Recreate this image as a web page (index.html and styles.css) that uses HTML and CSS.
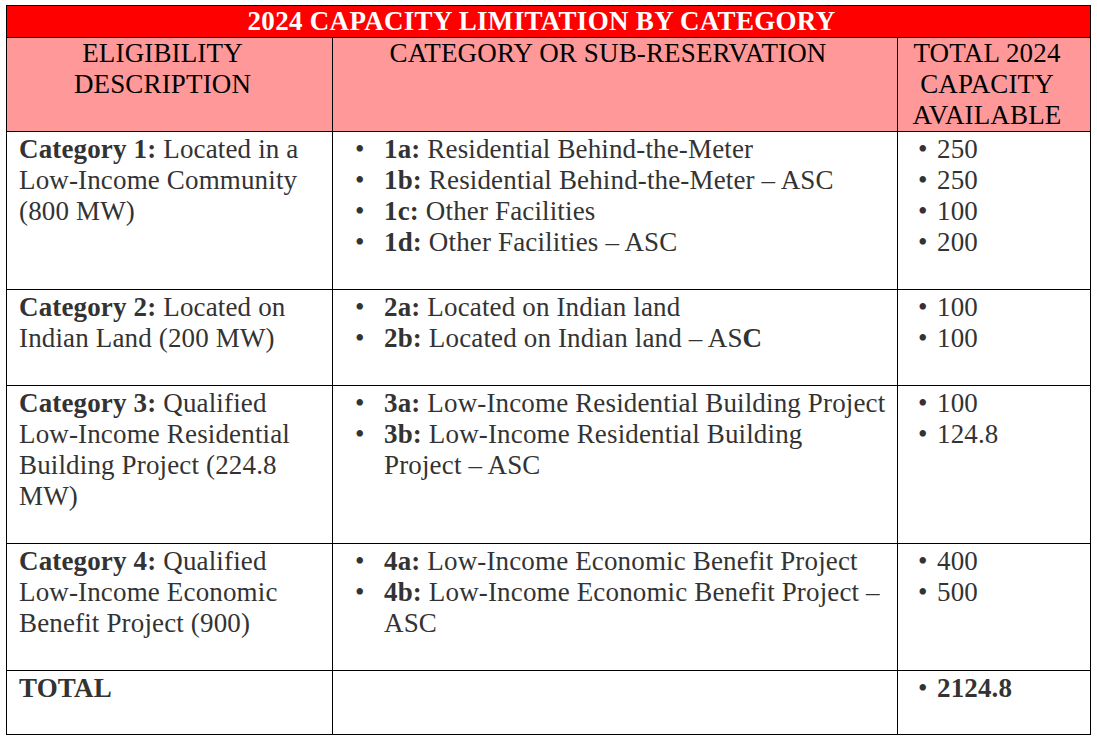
FILE: index.html
```html
<!DOCTYPE html>
<html lang="en">
<head>
<meta charset="utf-8">
<title>2024 Capacity Limitation by Category</title>
<link rel="stylesheet" href="styles.css">
</head>
<body>
<table class="cap-table">
  <colgroup>
    <col class="col-desc">
    <col class="col-cat">
    <col class="col-total">
  </colgroup>
  <thead>
    <tr class="title-row">
      <th colspan="3">2024 CAPACITY LIMITATION BY CATEGORY</th>
    </tr>
    <tr class="head-row">
      <th>ELIGIBILITY DESCRIPTION</th>
      <th>CATEGORY OR SUB-RESERVATION</th>
      <th>TOTAL 2024 CAPACITY AVAILABLE</th>
    </tr>
  </thead>
  <tbody>
    <tr>
      <td class="desc"><b>Category 1:</b> Located in a <span class="nowrap">Low-Income</span> Community (800 MW)</td>
      <td>
        <ul class="list list-wide">
          <li><span><b>1a:</b> Residential Behind-the-Meter</span></li>
          <li><span><b>1b:</b> Residential Behind-the-Meter – ASC</span></li>
          <li><span><b>1c:</b> Other Facilities</span></li>
          <li><span><b>1d:</b> Other Facilities – ASC</span></li>
        </ul>
      </td>
      <td>
        <ul class="list list-narrow">
          <li><span>250</span></li>
          <li><span>250</span></li>
          <li><span>100</span></li>
          <li><span>200</span></li>
        </ul>
      </td>
    </tr>
    <tr>
      <td class="desc"><b>Category 2:</b> Located on Indian Land (200 MW)</td>
      <td>
        <ul class="list list-wide">
          <li><span><b>2a:</b> Located on Indian land</span></li>
          <li><span><b>2b:</b> Located on Indian land – AS<b>C</b></span></li>
        </ul>
      </td>
      <td>
        <ul class="list list-narrow">
          <li><span>100</span></li>
          <li><span>100</span></li>
        </ul>
      </td>
    </tr>
    <tr>
      <td class="desc"><b>Category 3:</b> Qualified <span class="nowrap">Low-Income</span> Residential Building Project (224.8 MW)</td>
      <td>
        <ul class="list list-wide">
          <li><span><b>3a:</b> Low-Income Residential Building Project</span></li>
          <li><span><b>3b:</b> Low-Income Residential Building <span class="nowrap">Project – ASC</span></span></li>
        </ul>
      </td>
      <td>
        <ul class="list list-narrow">
          <li><span>100</span></li>
          <li><span>124.8</span></li>
        </ul>
      </td>
    </tr>
    <tr>
      <td class="desc"><b>Category 4:</b> Qualified <span class="nowrap">Low-Income</span> Economic Benefit Project (900)</td>
      <td>
        <ul class="list list-wide">
          <li><span><b>4a:</b> Low-Income Economic Benefit Project</span></li>
          <li><span><b>4b:</b> Low-Income Economic Benefit Project – ASC</span></li>
        </ul>
      </td>
      <td>
        <ul class="list list-narrow">
          <li><span>400</span></li>
          <li><span>500</span></li>
        </ul>
      </td>
    </tr>
    <tr>
      <td class="desc"><b>TOTAL</b></td>
      <td></td>
      <td>
        <ul class="list list-narrow">
          <li><span><b>2124.8</b></span></li>
        </ul>
      </td>
    </tr>
  </tbody>
</table>
</body>
</html>
```

FILE: styles.css
```css
html, body {
  background: #ffffff;
}

body {
  margin: 5px 0 0 6px;
  font-family: "Liberation Serif", "Times New Roman", serif;
  font-size: 27px;
  line-height: 31px;
  color: #333333;
}

.cap-table {
  width: 1084px;
  border-collapse: collapse;
  table-layout: fixed;
  letter-spacing: 0.15px;
}

.col-desc { width: 326px; }
.col-cat { width: 565px; }
.col-total { width: 193px; }

.cap-table th,
.cap-table td {
  border: 1px solid #000000;
  vertical-align: top;
}

.title-row th {
  background: #ff0000;
  color: #ffffff;
  font-weight: bold;
  text-align: center;
  padding: 0 14px 0 0;
  height: 31px;
  letter-spacing: 0.3px;
}

.head-row th {
  background: #ff9999;
  color: #000000;
  font-weight: normal;
  text-align: center;
  padding: 0 22px 0 8px;
}

.cap-table td {
  padding: 2px 4px 31px 12px;
}

.cap-table tr:last-child td {
  padding-bottom: 30px;
}

.nowrap {
  white-space: nowrap;
}

.list {
  list-style: none;
  margin: 0;
  padding: 0;
}

.list li {
  display: flex;
}

.list li::before {
  content: "•";
  flex: none;
}

.list-wide li::before {
  width: 29px;
  padding-left: 10px;
}

.list-narrow li::before {
  width: 19px;
  padding-left: 8px;
}
```
